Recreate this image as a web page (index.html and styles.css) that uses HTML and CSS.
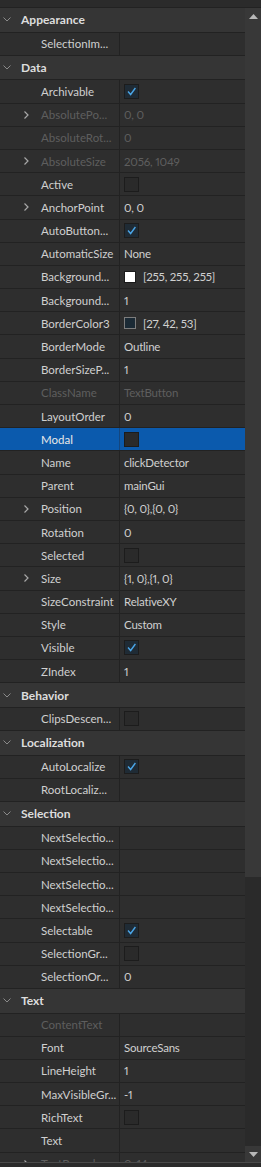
FILE: index.html
```html
<!DOCTYPE html>
<html>
<head>
<meta charset="utf-8">
<link rel="stylesheet" href="styles.css">
</head>
<body>
<div class="panel">
  <div class="topbar"></div>
  <div class="main">
    <div class="list">
      <div class="hdr"><svg class="chev" viewBox="0 0 8 5"><path d="M0.5 0.5 L4 4 L7.5 0.5"/></svg><span>Appearance</span></div>
      <div class="row"><div class="name"><i class="exp"></i><span>SelectionIm...</span></div><div class="val"></div></div>

      <div class="hdr"><svg class="chev" viewBox="0 0 8 5"><path d="M0.5 0.5 L4 4 L7.5 0.5"/></svg><span>Data</span></div>
      <div class="row"><div class="name"><i class="exp"></i><span>Archivable</span></div><div class="val"><span class="cb on"><svg viewBox="0 0 15 15"><path d="M3.5 7.5 L6.5 11 L12 3.5"/></svg></span></div></div>
      <div class="row dim"><div class="name"><i class="exp"><svg viewBox="0 0 5 8"><path d="M0.5 0.5 L4 4 L0.5 7.5"/></svg></i><span>AbsolutePo...</span></div><div class="val">0, 0</div></div>
      <div class="row dim"><div class="name"><i class="exp"></i><span>AbsoluteRot...</span></div><div class="val">0</div></div>
      <div class="row dim"><div class="name"><i class="exp"><svg viewBox="0 0 5 8"><path d="M0.5 0.5 L4 4 L0.5 7.5"/></svg></i><span>AbsoluteSize</span></div><div class="val">2056, 1049</div></div>
      <div class="row"><div class="name"><i class="exp"></i><span>Active</span></div><div class="val"><span class="cb"></span></div></div>
      <div class="row"><div class="name"><i class="exp"><svg viewBox="0 0 5 8"><path d="M0.5 0.5 L4 4 L0.5 7.5"/></svg></i><span>AnchorPoint</span></div><div class="val">0, 0</div></div>
      <div class="row"><div class="name"><i class="exp"></i><span>AutoButton...</span></div><div class="val"><span class="cb on"><svg viewBox="0 0 15 15"><path d="M3.5 7.5 L6.5 11 L12 3.5"/></svg></span></div></div>
      <div class="row"><div class="name"><i class="exp"></i><span>AutomaticSize</span></div><div class="val">None</div></div>
      <div class="row"><div class="name"><i class="exp"></i><span>Background...</span></div><div class="val"><span class="sw white"></span><span class="swt">[255, 255, 255]</span></div></div>
      <div class="row"><div class="name"><i class="exp"></i><span>Background...</span></div><div class="val">1</div></div>
      <div class="row"><div class="name"><i class="exp"></i><span>BorderColor3</span></div><div class="val"><span class="sw navy"></span><span class="swt">[27, 42, 53]</span></div></div>
      <div class="row"><div class="name"><i class="exp"></i><span>BorderMode</span></div><div class="val">Outline</div></div>
      <div class="row"><div class="name"><i class="exp"></i><span>BorderSizeP...</span></div><div class="val">1</div></div>
      <div class="row dim"><div class="name"><i class="exp"></i><span>ClassName</span></div><div class="val">TextButton</div></div>
      <div class="row"><div class="name"><i class="exp"></i><span>LayoutOrder</span></div><div class="val">0</div></div>
      <div class="row sel"><div class="name"><i class="exp"></i><span>Modal</span></div><div class="val"><span class="cb"></span></div></div>
      <div class="row"><div class="name"><i class="exp"></i><span>Name</span></div><div class="val">clickDetector</div></div>
      <div class="row"><div class="name"><i class="exp"></i><span>Parent</span></div><div class="val">mainGui</div></div>
      <div class="row"><div class="name"><i class="exp"><svg viewBox="0 0 5 8"><path d="M0.5 0.5 L4 4 L0.5 7.5"/></svg></i><span>Position</span></div><div class="val">{0, 0},{0, 0}</div></div>
      <div class="row"><div class="name"><i class="exp"></i><span>Rotation</span></div><div class="val">0</div></div>
      <div class="row"><div class="name"><i class="exp"></i><span>Selected</span></div><div class="val"><span class="cb"></span></div></div>
      <div class="row"><div class="name"><i class="exp"><svg viewBox="0 0 5 8"><path d="M0.5 0.5 L4 4 L0.5 7.5"/></svg></i><span>Size</span></div><div class="val">{1, 0},{1, 0}</div></div>
      <div class="row"><div class="name"><i class="exp"></i><span>SizeConstraint</span></div><div class="val">RelativeXY</div></div>
      <div class="row"><div class="name"><i class="exp"></i><span>Style</span></div><div class="val">Custom</div></div>
      <div class="row"><div class="name"><i class="exp"></i><span>Visible</span></div><div class="val"><span class="cb on"><svg viewBox="0 0 15 15"><path d="M3.5 7.5 L6.5 11 L12 3.5"/></svg></span></div></div>
      <div class="row"><div class="name"><i class="exp"></i><span>ZIndex</span></div><div class="val">1</div></div>

      <div class="hdr"><svg class="chev" viewBox="0 0 8 5"><path d="M0.5 0.5 L4 4 L7.5 0.5"/></svg><span>Behavior</span></div>
      <div class="row"><div class="name"><i class="exp"></i><span>ClipsDescen...</span></div><div class="val"><span class="cb"></span></div></div>

      <div class="hdr"><svg class="chev" viewBox="0 0 8 5"><path d="M0.5 0.5 L4 4 L7.5 0.5"/></svg><span>Localization</span></div>
      <div class="row"><div class="name"><i class="exp"></i><span>AutoLocalize</span></div><div class="val"><span class="cb on"><svg viewBox="0 0 15 15"><path d="M3.5 7.5 L6.5 11 L12 3.5"/></svg></span></div></div>
      <div class="row"><div class="name"><i class="exp"></i><span>RootLocaliz...</span></div><div class="val"></div></div>

      <div class="hdr"><svg class="chev" viewBox="0 0 8 5"><path d="M0.5 0.5 L4 4 L7.5 0.5"/></svg><span>Selection</span></div>
      <div class="row"><div class="name"><i class="exp"></i><span>NextSelectio...</span></div><div class="val"></div></div>
      <div class="row"><div class="name"><i class="exp"></i><span>NextSelectio...</span></div><div class="val"></div></div>
      <div class="row"><div class="name"><i class="exp"></i><span>NextSelectio...</span></div><div class="val"></div></div>
      <div class="row"><div class="name"><i class="exp"></i><span>NextSelectio...</span></div><div class="val"></div></div>
      <div class="row"><div class="name"><i class="exp"></i><span>Selectable</span></div><div class="val"><span class="cb on"><svg viewBox="0 0 15 15"><path d="M3.5 7.5 L6.5 11 L12 3.5"/></svg></span></div></div>
      <div class="row"><div class="name"><i class="exp"></i><span>SelectionGr...</span></div><div class="val"><span class="cb"></span></div></div>
      <div class="row"><div class="name"><i class="exp"></i><span>SelectionOr...</span></div><div class="val">0</div></div>

      <div class="hdr"><svg class="chev" viewBox="0 0 8 5"><path d="M0.5 0.5 L4 4 L7.5 0.5"/></svg><span>Text</span></div>
      <div class="row dim"><div class="name"><i class="exp"></i><span>ContentText</span></div><div class="val"></div></div>
      <div class="row"><div class="name"><i class="exp"></i><span>Font</span></div><div class="val">SourceSans</div></div>
      <div class="row"><div class="name"><i class="exp"></i><span>LineHeight</span></div><div class="val">1</div></div>
      <div class="row"><div class="name"><i class="exp"></i><span>MaxVisibleGr...</span></div><div class="val">-1</div></div>
      <div class="row"><div class="name"><i class="exp"></i><span>RichText</span></div><div class="val"><span class="cb"></span></div></div>
      <div class="row"><div class="name"><i class="exp"></i><span>Text</span></div><div class="val"></div></div>
      <div class="row dim"><div class="name"><i class="exp"><svg viewBox="0 0 5 8"><path d="M0.5 0.5 L4 4 L0.5 7.5"/></svg></i><span>TextBounds</span></div><div class="val">0, 14</div></div>
    </div>
    <div class="scroll">
      <div class="sbtn"><svg viewBox="0 0 9 5"><path d="M0 5 L4.5 0 L9 5 Z"/></svg></div>
      <div class="thumb"></div>
      <div class="track"></div>
      <div class="sbtn"><svg viewBox="0 0 9 5"><path d="M0 0 L4.5 5 L9 0 Z"/></svg></div>
    </div>
  </div>
  <div class="bottombar"></div>
</div>
</body>
</html>
```

FILE: styles.css
```css
* { box-sizing: border-box; }
html, body { margin: 0; padding: 0; background: #2e2e2e; }
body {
  font-family: Lato, "Open Sans", sans-serif;
  font-size: 11.5px;
  color: #d0d0d0;
}
.panel {
  width: 261px;
  height: 1167px;
  display: flex;
  flex-direction: column;
  background: #2e2e2e;
  overflow: hidden;
}
.topbar {
  height: 8px;
  flex: none;
  background: #2b2b2b;
  border-bottom: 1px solid #222222;
}
.main {
  flex: 1;
  display: flex;
  min-height: 0;
}
.list {
  width: 245px;
  flex: none;
  overflow: hidden;
}
.hdr {
  height: 24.6px;
  display: flex;
  align-items: center;
  background: #353535;
  border-bottom: 1px solid #222222;
  font-weight: 700;
  font-size: 12px;
  color: #dddddd;
}
.chev {
  width: 8px;
  height: 5px;
  margin: 0 10px 0 3px;
  fill: none;
  stroke: #8a8a8a;
  stroke-width: 1;
}
.row {
  height: 23.2px;
  display: flex;
  border-bottom: 1px solid #222222;
  background: #2e2e2e;
}
.name {
  width: 120px;
  flex: none;
  display: flex;
  align-items: center;
  padding-left: 24px;
  border-right: 1px solid #222222;
  white-space: nowrap;
  overflow: hidden;
}
.exp {
  width: 17px;
  height: 8px;
  flex: none;
  display: flex;
}
.exp svg {
  width: 5px;
  height: 8px;
  fill: none;
  stroke: #a8a8a8;
  stroke-width: 1.2;
}
.val {
  flex: 1;
  display: flex;
  align-items: center;
  padding-left: 4px;
  white-space: nowrap;
  overflow: hidden;
  font-variant-numeric: proportional-nums;
  letter-spacing: -0.2px;
}
.dim { color: #5e5e5e; }
.sel { background: #0b5aad; }
.sel .name { color: #e8e8e8; border-right-color: #14467e; }
.cb {
  width: 15px;
  height: 15px;
  background: #2a2a2a;
  border: 1px solid #1c1c1c;
  display: flex;
}
.cb.on { background: #1f2b35; }
.cb svg {
  width: 13px;
  height: 13px;
  fill: none;
  stroke: #4aa6e8;
  stroke-width: 1.6;
}
.sw {
  width: 12px;
  height: 12px;
  flex: none;
  border: 1px solid #1a1a1a;
  margin-right: 7px;
}
.sw.white { background: #ffffff; }
.sw.navy { background: #1b2a35; border-color: #7d7d7d; }
.scroll {
  width: 16px;
  flex: none;
  display: flex;
  flex-direction: column;
  background: #2a2a2a;
}
.sbtn {
  height: 16px;
  flex: none;
  display: flex;
  align-items: center;
  justify-content: center;
  background: #383838;
}
.sbtn svg {
  width: 9px;
  height: 5px;
  fill: #b8b8b8;
}
.thumb {
  height: 853px;
  flex: none;
  background: #383838;
}
.track { flex: 1; }
.bottombar {
  height: 5px;
  flex: none;
  background: #2b2b2b;
  border-top: 1px solid #4a4a4a;
}
```
